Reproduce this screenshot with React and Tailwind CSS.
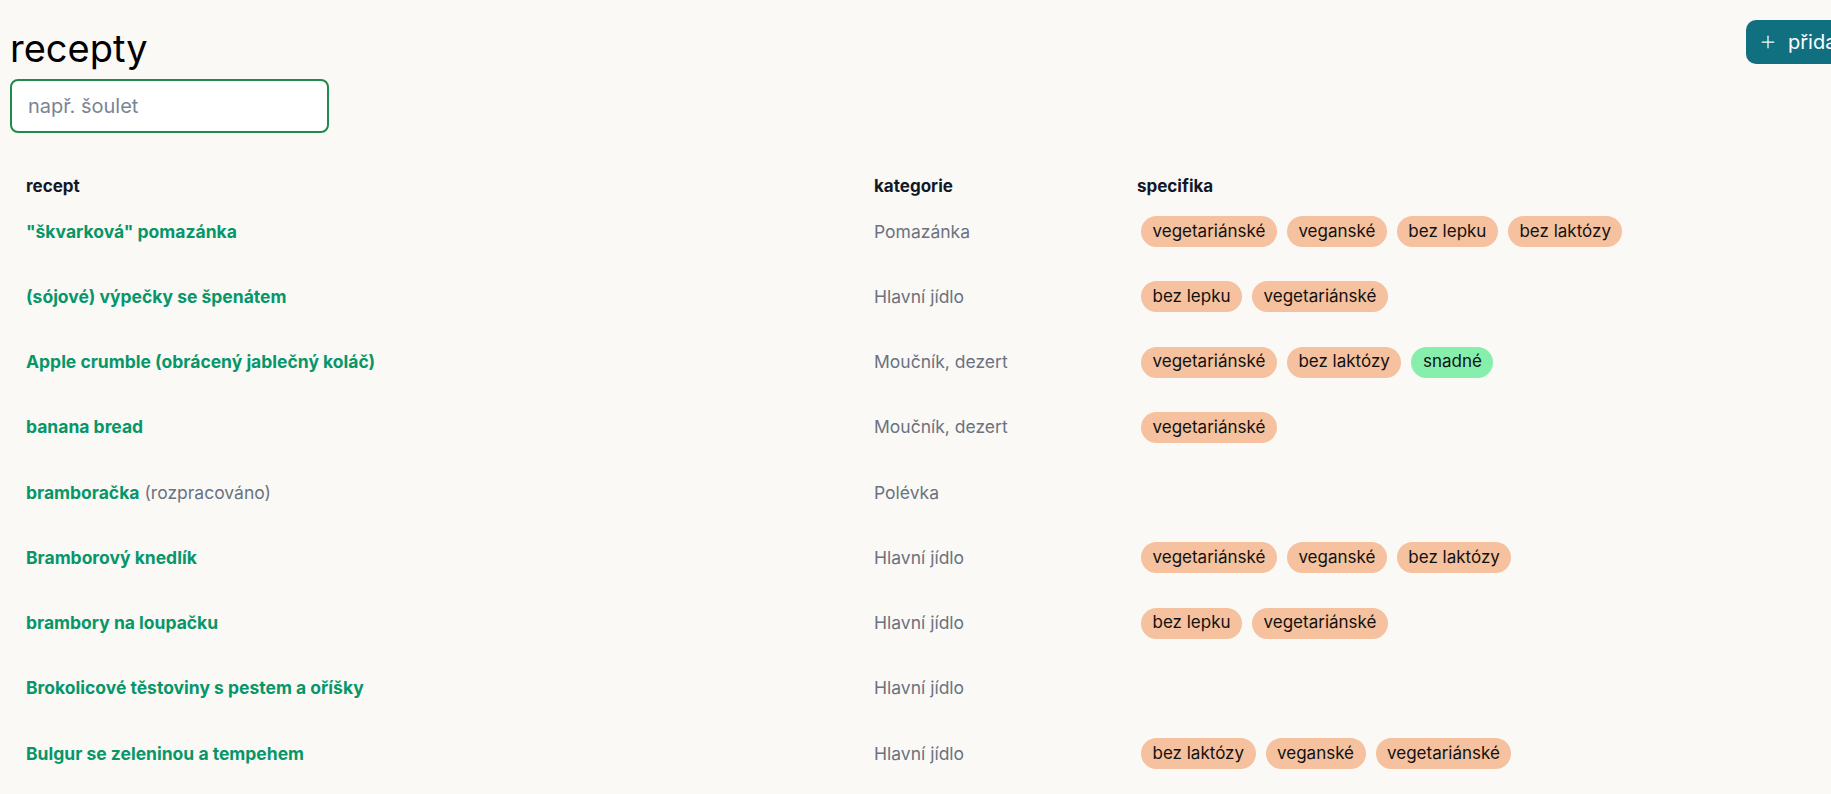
import { Plus } from 'lucide-react';

const RECIPES = [
  { name: '"škvarková" pomazánka', cat: 'Pomazánka', tags: ['vegetariánské', 'veganské', 'bez lepku', 'bez laktózy'] },
  { name: '(sójové) výpečky se špenátem', cat: 'Hlavní jídlo', tags: ['bez lepku', 'vegetariánské'] },
  { name: 'Apple crumble (obrácený jablečný koláč)', cat: 'Moučník, dezert', tags: ['vegetariánské', 'bez laktózy', 'snadné'] },
  { name: 'banana bread', cat: 'Moučník, dezert', tags: ['vegetariánské'] },
  { name: 'bramboračka', note: '(rozpracováno)', cat: 'Polévka', tags: [] },
  { name: 'Bramborový knedlík', cat: 'Hlavní jídlo', tags: ['vegetariánské', 'veganské', 'bez laktózy'] },
  { name: 'brambory na loupačku', cat: 'Hlavní jídlo', tags: ['bez lepku', 'vegetariánské'] },
  { name: 'Brokolicové těstoviny s pestem a oříšky', cat: 'Hlavní jídlo', tags: [] },
  { name: 'Bulgur se zeleninou a tempehem', cat: 'Hlavní jídlo', tags: ['bez laktózy', 'veganské', 'vegetariánské'] },
];

function Tag({ label }) {
  const green = label === 'snadné';
  return (
    <span
      className={`h-[31px] flex items-center px-[11.5px] rounded-full text-[17px] text-[#111] ${green ? 'bg-[#86efac]' : 'bg-[#f5c19e]'}`}
    >
      {label}
    </span>
  );
}

export default function App() {
  return (
    <div className="min-h-screen overflow-hidden bg-[#faf9f6] pl-[10px] text-[17px] font-['Inter',sans-serif]">
      <div className="flex items-start">
        <div className="pt-[28px]">
          <h1 className="text-[38px] leading-[41px] text-black">recepty</h1>
          <input
            placeholder="např. šoulet"
            className="mt-[10px] w-[319px] h-[54px] rounded-lg border-2 border-[#1f8a4c] bg-white px-4 text-xl text-gray-900 placeholder:text-[#7a8494] outline-none"
          />
        </div>
        <div className="ml-auto w-[85px] shrink-0 pt-[20px]">
          <button className="h-[44px] flex items-center gap-[10px] whitespace-nowrap rounded-[10px] bg-[#10707f] pl-[12px] pr-5 text-xl text-white">
            <Plus size={20} strokeWidth={1.5} />
            přidat recept
          </button>
        </div>
      </div>

      <div className="mt-[42px] grid grid-cols-[848px_263px_1fr]">
        <div className="px-4 h-6 flex items-center font-bold text-[#111827]">recept</div>
        <div className="px-4 h-6 flex items-center font-bold text-[#111827]">kategorie</div>
        <div className="px-4 h-6 flex items-center font-bold text-[#111827]">specifika</div>
        {RECIPES.map(r => (
          <div key={r.name} className="contents">
            <div className="px-4 h-[65.25px] flex items-center text-[17.5px]">
              <span className="font-bold text-[#079669]">{r.name}</span>
              {r.note && <span className="ml-[5px] text-[#6b7280]">{r.note}</span>}
            </div>
            <div className="px-4 h-[65.25px] flex items-center text-[17.5px] text-[#6b7280]">{r.cat}</div>
            <div className="px-4 pl-5 h-[65.25px] flex items-center gap-[10px]">
              {r.tags.map(t => <Tag key={t} label={t} />)}
            </div>
          </div>
        ))}
      </div>
    </div>
  );
}
